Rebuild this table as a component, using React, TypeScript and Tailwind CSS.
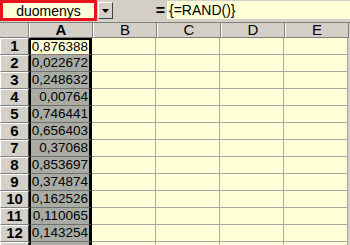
const values = [
  '0,876388',
  '0,022672',
  '0,248632',
  '0,00764',
  '0,746441',
  '0,656403',
  '0,37068',
  '0,853697',
  '0,374874',
  '0,162526',
  '0,110065',
  '0,143254',
  '',
]

const cols = ['A', 'B', 'C', 'D', 'E']

export default function App() {
  return (
    <div className="h-[245px] w-[350px] overflow-hidden bg-[#d4d0c8] font-['Liberation_Sans',Arial,sans-serif] text-[13px] text-black">
      {/* formula bar */}
      <div className="flex h-[21px] items-stretch">
        <div className="flex w-[97px] items-center justify-center border-[3px] border-[#e8141c] bg-[#ffffd8] pt-px text-[14px]">
          duomenys
        </div>
        <div className="ml-px mt-[2px] flex h-[17px] w-[15px] items-center justify-center border border-b-[#404040] border-l-white border-r-[#404040] border-t-white bg-[#d4d0c8]">
          <svg width="7" height="4" viewBox="0 0 7 4">
            <path d="M0 0h7L3.5 4z" fill="#000" />
          </svg>
        </div>
        <div className="flex w-[54px] items-center justify-end pr-[2px] text-[16px] font-bold">=</div>
        <div className="mt-[1px] flex h-[18px] flex-1 items-center bg-[#ffffd8] pl-[2px] text-[14px]">{'{=RAND()}'}</div>
      </div>

      {/* column headers */}
      <div className="mt-[1px] flex h-[16px] border-t border-[#808080]">
        <div className="w-[29px] border-b border-r border-b-[#808080] border-r-[#808080] bg-[#d4d0c8]" />
        {cols.map((c, i) => (
          <div
            key={c}
            className={
              'flex w-[64px] items-center justify-center border-b border-l border-r border-b-[#808080] border-l-white border-r-[#808080] bg-[#d4d0c8] text-[15px] ' +
              (i === 0 ? 'font-bold' : '')
            }
          >
            {c}
          </div>
        ))}
      </div>

      {/* rows */}
      {values.map((v, r) => (
        <div key={r} className="flex h-[17px]">
          <div className="flex w-[29px] items-center justify-center border-b border-l border-r border-t border-b-[#808080] border-l-white border-r-[#404040] border-t-white bg-[#d4d0c8] text-[15px] font-bold">
            {r < 12 ? r + 1 : ''}
          </div>
          <div
            className={
              'flex w-[63px] items-center justify-end border-l-2 border-r-[3px] border-black pr-[1px] text-[13.5px] ' +
              (r === 0 ? 'border-t-2 border-b border-b-[#808080] bg-[#ffffd8]' : 'border-b border-b-[#707070] bg-[#a9aca4]')
            }
          >
            {v}
          </div>
          {[1, 2, 3, 4].map((c) => (
            <div key={c} className="w-[64px] shrink-0 border-b border-r border-[#aaa69c] bg-[#ffffd8]" />
          ))}
        </div>
      ))}
    </div>
  )
}
